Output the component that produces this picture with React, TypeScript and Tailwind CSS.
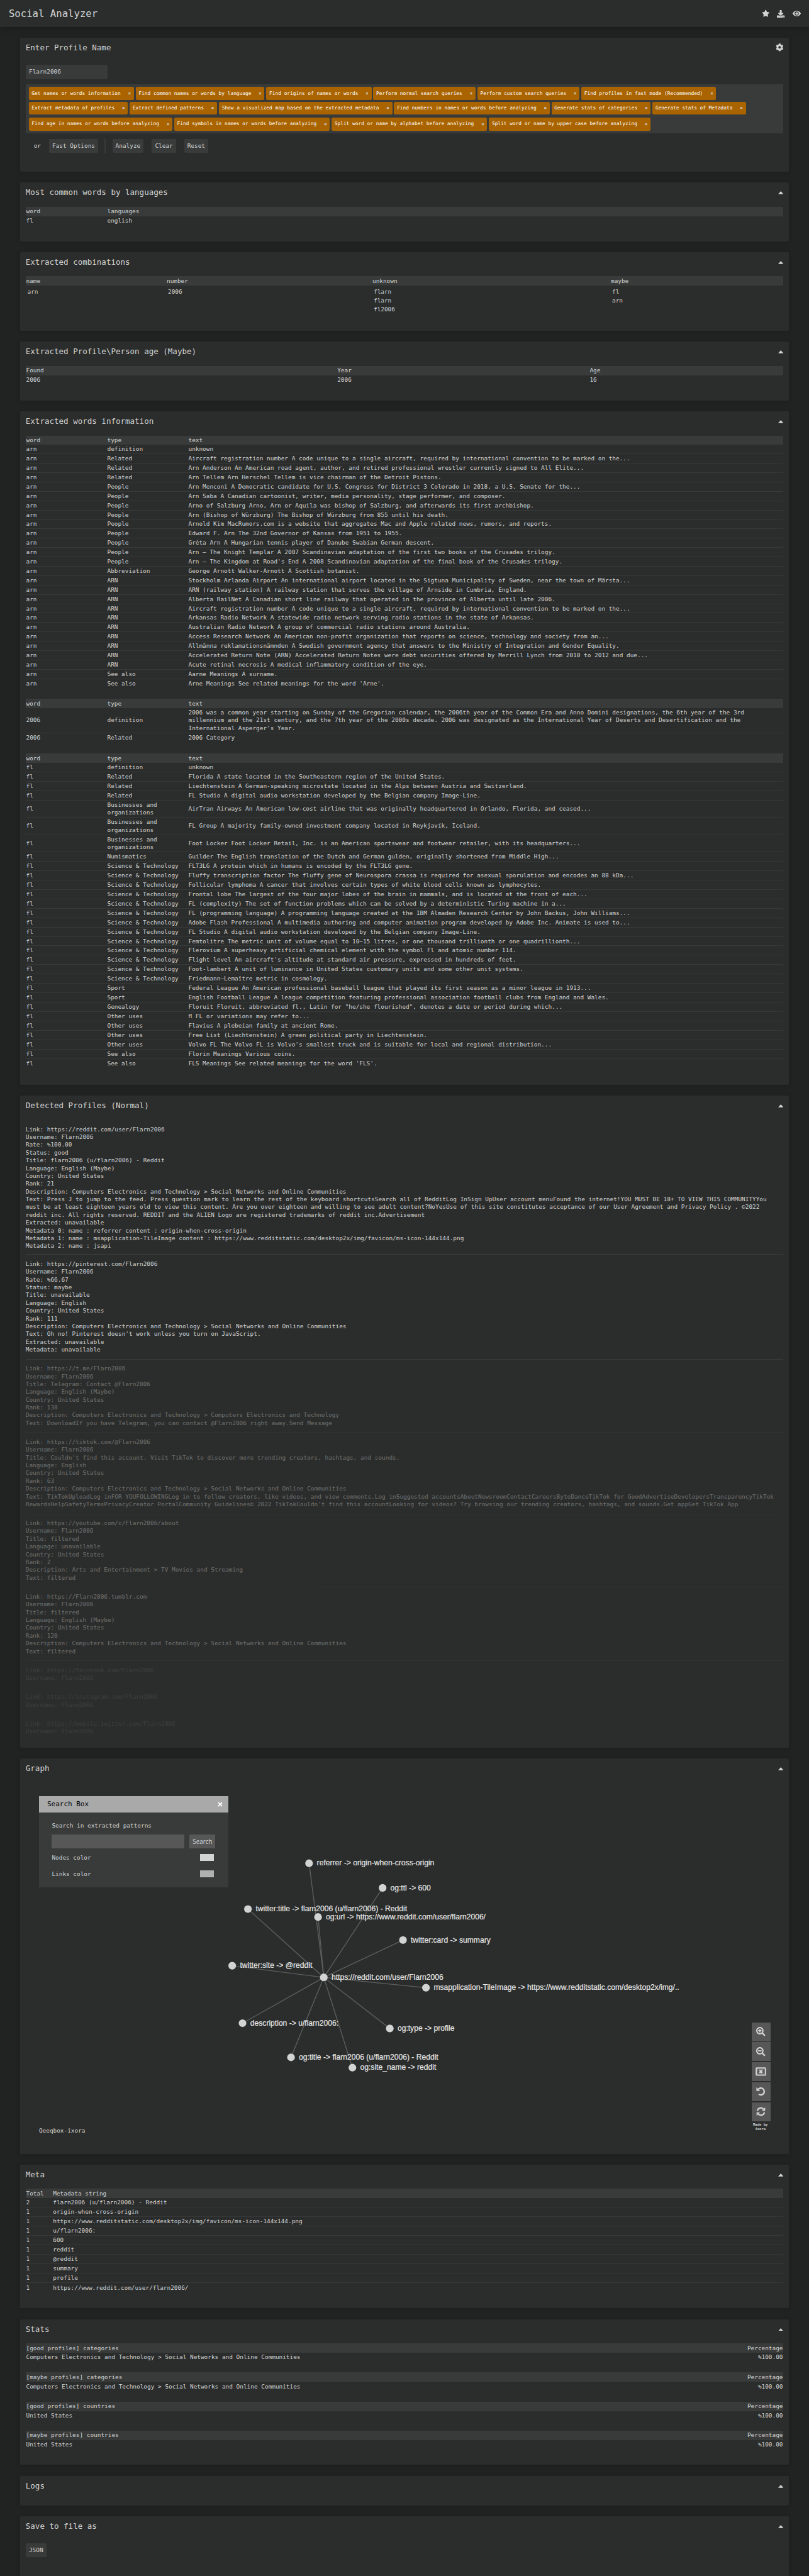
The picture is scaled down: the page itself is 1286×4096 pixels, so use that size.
import React from 'react';
import { FaStar, FaCog, FaDownload, FaEye, FaSearchPlus, FaSearchMinus, FaTimes } from 'react-icons/fa';

type Row = string[];

const TAG_ROWS: string[][] = [
  [
    'Get names or words information',
    'Find common names or words by language',
    'Find origins of names or words',
    'Perform normal search queries',
    'Perform custom search queries',
    'Find profiles in fast mode (Recommended)',
  ],
  [
    'Extract metadata of profiles',
    'Extract defined patterns',
    'Show a visualized map based on the extracted metadata',
    'Find numbers in names or words before analyzing',
    'Generate stats of categories',
    'Generate stats of Metadata',
  ],
  [
    'Find age in names or words before analyzing',
    'Find symbols in names or words before analyzing',
    'Split word or name by alphabet before analyzing',
    'Split word or name by upper case before analyzing',
  ],
];

const ARN: Row[] = [
  ['arn', 'definition', 'unknown'],
  ['arn', 'Related', 'Aircraft registration number A code unique to a single aircraft, required by international convention to be marked on the...'],
  ['arn', 'Related', 'Arn Anderson An American road agent, author, and retired professional wrestler currently signed to All Elite...'],
  ['arn', 'Related', 'Arn Tellem Arn Herschel Tellem is vice chairman of the Detroit Pistons.'],
  ['arn', 'People', 'Arn Menconi A Democratic candidate for U.S. Congress for District 3 Colorado in 2018, a U.S. Senate for the...'],
  ['arn', 'People', 'Arn Saba A Canadian cartoonist, writer, media personality, stage performer, and composer.'],
  ['arn', 'People', 'Arno of Salzburg Arno, Arn or Aquila was bishop of Salzburg, and afterwards its first archbishop.'],
  ['arn', 'People', 'Arn (Bishop of Würzburg) The Bishop of Würzburg from 855 until his death.'],
  ['arn', 'People', 'Arnold Kim MacRumors.com is a website that aggregates Mac and Apple related news, rumors, and reports.'],
  ['arn', 'People', 'Edward F. Arn The 32nd Governor of Kansas from 1951 to 1955.'],
  ['arn', 'People', 'Gréta Arn A Hungarian tennis player of Danube Swabian German descent.'],
  ['arn', 'People', 'Arn – The Knight Templar A 2007 Scandinavian adaptation of the first two books of the Crusades trilogy.'],
  ['arn', 'People', "Arn – The Kingdom at Road's End A 2008 Scandinavian adaptation of the final book of the Crusades trilogy."],
  ['arn', 'Abbreviation', 'George Arnott Walker-Arnott A Scottish botanist.'],
  ['arn', 'ARN', 'Stockholm Arlanda Airport An international airport located in the Sigtuna Municipality of Sweden, near the town of Märsta...'],
  ['arn', 'ARN', 'ARN (railway station) A railway station that serves the village of Arnside in Cumbria, England.'],
  ['arn', 'ARN', 'Alberta RailNet A Canadian short line railway that operated in the province of Alberta until late 2006.'],
  ['arn', 'ARN', 'Aircraft registration number A code unique to a single aircraft, required by international convention to be marked on the...'],
  ['arn', 'ARN', 'Arkansas Radio Network A statewide radio network serving radio stations in the state of Arkansas.'],
  ['arn', 'ARN', 'Australian Radio Network A group of commercial radio stations around Australia.'],
  ['arn', 'ARN', 'Access Research Network An American non-profit organization that reports on science, technology and society from an...'],
  ['arn', 'ARN', 'Allmänna reklamationsnämnden A Swedish government agency that answers to the Ministry of Integration and Gender Equality.'],
  ['arn', 'ARN', 'Accelerated Return Note (ARN) Accelerated Return Notes were debt securities offered by Merrill Lynch from 2010 to 2012 and due...'],
  ['arn', 'ARN', 'Acute retinal necrosis A medical inflammatory condition of the eye.'],
  ['arn', 'See also', 'Aarne Meanings A surname.'],
  ['arn', 'See also', "Arne Meanings See related meanings for the word 'Arne'."],
];

const Y2006: Row[] = [
  [
    '2006',
    'definition',
    "2006 was a common year starting on Sunday of the Gregorian calendar, the 2006th year of the Common Era and Anno Domini designations, the 6th year of the 3rd\nmillennium and the 21st century, and the 7th year of the 2000s decade. 2006 was designated as the International Year of Deserts and Desertification and the\nInternational Asperger's Year.",
  ],
  ['2006', 'Related', '2006 Category'],
];

const BO = 'Businesses and\norganizations';
const ST = 'Science & Technology';
const FL: Row[] = [
  ['fl', 'definition', 'unknown'],
  ['fl', 'Related', 'Florida A state located in the Southeastern region of the United States.'],
  ['fl', 'Related', 'Liechtenstein A German-speaking microstate located in the Alps between Austria and Switzerland.'],
  ['fl', 'Related', 'FL Studio A digital audio workstation developed by the Belgian company Image-Line.'],
  ['fl', BO, 'AirTran Airways An American low-cost airline that was originally headquartered in Orlando, Florida, and ceased...'],
  ['fl', BO, 'FL Group A majority family-owned investment company located in Reykjavík, Iceland.'],
  ['fl', BO, 'Foot Locker Foot Locker Retail, Inc. is an American sportswear and footwear retailer, with its headquarters...'],
  ['fl', 'Numismatics', 'Guilder The English translation of the Dutch and German gulden, originally shortened from Middle High...'],
  ['fl', ST, 'FLT3LG A protein which in humans is encoded by the FLT3LG gene.'],
  ['fl', ST, 'Fluffy transcription factor The fluffy gene of Neurospora crassa is required for asexual sporulation and encodes an 88 kDa...'],
  ['fl', ST, 'Follicular lymphoma A cancer that involves certain types of white blood cells known as lymphocytes.'],
  ['fl', ST, 'Frontal lobe The largest of the four major lobes of the brain in mammals, and is located at the front of each...'],
  ['fl', ST, 'FL (complexity) The set of function problems which can be solved by a deterministic Turing machine in a...'],
  ['fl', ST, 'FL (programming language) A programming language created at the IBM Almaden Research Center by John Backus, John Williams...'],
  ['fl', ST, 'Adobe Flash Professional A multimedia authoring and computer animation program developed by Adobe Inc. Animate is used to...'],
  ['fl', ST, 'FL Studio A digital audio workstation developed by the Belgian company Image-Line.'],
  ['fl', ST, 'Femtolitre The metric unit of volume equal to 10−15 litres, or one thousand trillionth or one quadrillionth...'],
  ['fl', ST, 'Flerovium A superheavy artificial chemical element with the symbol Fl and atomic number 114.'],
  ['fl', ST, "Flight level An aircraft's altitude at standard air pressure, expressed in hundreds of feet."],
  ['fl', ST, 'Foot-lambert A unit of luminance in United States customary units and some other unit systems.'],
  ['fl', ST, 'Friedmann–Lemaître metric in cosmology.'],
  ['fl', 'Sport', 'Federal League An American professional baseball league that played its first season as a minor league in 1913...'],
  ['fl', 'Sport', 'English Football League A league competition featuring professional association football clubs from England and Wales.'],
  ['fl', 'Genealogy', 'Floruit Floruit, abbreviated fl., Latin for "he/she flourished", denotes a date or period during which...'],
  ['fl', 'Other uses', 'ﬂ FL or variations may refer to...'],
  ['fl', 'Other uses', 'Flavius A plebeian family at ancient Rome.'],
  ['fl', 'Other uses', 'Free List (Liechtenstein) A green political party in Liechtenstein.'],
  ['fl', 'Other uses', "Volvo FL The Volvo FL is Volvo's smallest truck and is suitable for local and regional distribution..."],
  ['fl', 'See also', 'Florin Meanings Various coins.'],
  ['fl', 'See also', "FLS Meanings See related meanings for the word 'FLS'."],
];

const SOCIAL = 'Computers Electronics and Technology > Social Networks and Online Communities';

const PROFILES: { tone: string; lines: string[] }[] = [
  {
    tone: 'opacity-100 pb-[6.6px]',
    lines: [
      'Link: https://reddit.com/user/Flarn2006',
      'Username: Flarn2006',
      'Rate: %100.00',
      'Status: good',
      'Title: flarn2006 (u/flarn2006) - Reddit',
      'Language: English (Maybe)',
      'Country: United States',
      'Rank: 21',
      'Description: ' + SOCIAL,
      'Text: Press J to jump to the feed. Press question mark to learn the rest of the keyboard shortcutsSearch all of RedditLog InSign UpUser account menuFound the internet!YOU MUST BE 18+ TO VIEW THIS COMMUNITYYou',
      'must be at least eighteen years old to view this content. Are you over eighteen and willing to see adult content?NoYesUse of this site constitutes acceptance of our User Agreement and Privacy Policy . ©2022',
      'reddit inc. All rights reserved. REDDIT and the ALIEN Logo are registered trademarks of reddit inc.Advertisement',
      'Extracted: unavailable',
      'Metadata 0: name : referrer content : origin-when-cross-origin',
      'Metadata 1: name : msapplication-TileImage content : https://www.redditstatic.com/desktop2x/img/favicon/ms-icon-144x144.png',
      'Metadata 2: name : jsapi',
    ],
  },
  {
    tone: 'opacity-100 pb-[8.2px]',
    lines: [
      'Link: https://pinterest.com/Flarn2006',
      'Username: Flarn2006',
      'Rate: %66.67',
      'Status: maybe',
      'Title: unavailable',
      'Language: English',
      'Country: United States',
      'Rank: 111',
      'Description: ' + SOCIAL,
      "Text: Oh no! Pinterest doesn't work unless you turn on JavaScript.",
      'Extracted: unavailable',
      'Metadata: unavailable',
    ],
  },
  {
    tone: 'opacity-40 pb-[8.2px]',
    lines: [
      'Link: https://t.me/Flarn2006',
      'Username: Flarn2006',
      'Title: Telegram: Contact @Flarn2006',
      'Language: English (Maybe)',
      'Country: United States',
      'Rank: 138',
      'Description: Computers Electronics and Technology > Computers Electronics and Technology',
      'Text: DownloadIf you have Telegram, you can contact @Flarn2006 right away.Send Message',
    ],
  },
  {
    tone: 'opacity-40 pb-[8.2px]',
    lines: [
      'Link: https://tiktok.com/@Flarn2006',
      'Username: Flarn2006',
      "Title: Couldn't find this account. Visit TikTok to discover more trending creators, hashtags, and sounds.",
      'Language: English',
      'Country: United States',
      'Rank: 63',
      'Description: ' + SOCIAL,
      'Text: TikTokUploadLog inFOR YOUFOLLOWINGLog in to follow creators, like videos, and view comments.Log inSuggested accountsAboutNewsroomContactCareersByteDanceTikTok for GoodAdvertiseDevelopersTransparencyTikTok',
      "RewardsHelpSafetyTermsPrivacyCreator PortalCommunity Guidelines© 2022 TikTokCouldn't find this accountLooking for videos? Try browsing our trending creators, hashtags, and sounds.Get appGet TikTok App",
    ],
  },
  {
    tone: 'opacity-40 pb-[8.2px]',
    lines: [
      'Link: https://youtube.com/c/Flarn2006/about',
      'Username: Flarn2006',
      'Title: filtered',
      'Language: unavailable',
      'Country: United States',
      'Rank: 2',
      'Description: Arts and Entertainment > TV Movies and Streaming',
      'Text: filtered',
    ],
  },
  {
    tone: 'opacity-40 pb-[8.2px]',
    lines: [
      'Link: https://Flarn2006.tumblr.com',
      'Username: Flarn2006',
      'Title: filtered',
      'Language: English (Maybe)',
      'Country: United States',
      'Rank: 120',
      'Description: ' + SOCIAL,
      'Text: filtered',
    ],
  },
  { tone: 'opacity-10 pb-[8.2px]', lines: ['Link: https://facebook.com/Flarn2006', 'Username: Flarn2006'] },
  { tone: 'opacity-10 pb-[8.2px]', lines: ['Link: https://instagram.com/Flarn2006', 'Username: Flarn2006'] },
  { tone: 'opacity-10 pb-[8.2px]', lines: ['Link: https://mobile.twitter.com/Flarn2006', 'Username: Flarn2006'] },
];

const META: Row[] = [
  ['2', 'flarn2006 (u/flarn2006) - Reddit'],
  ['1', 'origin-when-cross-origin'],
  ['1', 'https://www.redditstatic.com/desktop2x/img/favicon/ms-icon-144x144.png'],
  ['1', 'u/flarn2006:'],
  ['1', '600'],
  ['1', 'reddit'],
  ['1', '@reddit'],
  ['1', 'summary'],
  ['1', 'profile'],
  ['1', 'https://www.reddit.com/user/flarn2006/'],
];

const STATS: Row[] = [
  ['[good profiles] categories', SOCIAL],
  ['[maybe profiles] categories', SOCIAL],
  ['[good profiles] countries', 'United States'],
  ['[maybe profiles] countries', 'United States'],
];

const HUB = { x: 482.7, y: 348.2, label: 'https://reddit.com/user/Flarn2006' };
const NODES = [
  { x: 459.3, y: 166.7, label: 'referrer -> origin-when-cross-origin' },
  { x: 576.2, y: 205.9, label: 'og:ttl -> 600' },
  { x: 362.1, y: 239.5, label: 'twitter:title -> flarn2006 (u/flarn2006) - Reddit' },
  { x: 473.6, y: 252.2, label: 'og:url -> https://www.reddit.com/user/flarn2006/' },
  { x: 608.6, y: 288.8, label: 'twitter:card -> summary' },
  { x: 337.1, y: 329.6, label: 'twitter:site -> @reddit' },
  { x: 645.1, y: 364.6, label: 'msapplication-TileImage -> https://www.redditstatic.com/desktop2x/img/..' },
  { x: 353.5, y: 421.0, label: 'description -> u/flarn2006:' },
  { x: 587.6, y: 429.4, label: 'og:type -> profile' },
  { x: 430.6, y: 475.3, label: 'og:title -> flarn2006 (u/flarn2006) - Reddit' },
  { x: 528.2, y: 491.7, label: 'og:site_name -> reddit' },
];

function Caret() {
  return (
    <svg className="mt-[14.1px] h-[4.8px] w-[8.4px]" viewBox="0 0 10 6" preserveAspectRatio="none">
      <path d="M5 0 L10 6 L0 6 Z" fill="#d3d3d3" />
    </svg>
  );
}

function Card({ title, className, icon, children }: { title: string; className: string; icon?: React.ReactNode; children?: React.ReactNode }) {
  return (
    <section className={'relative shrink-0 rounded-[2px] bg-[#2b2d2c] px-[8.4px] shadow-[0_1px_7px_rgba(0,0,0,0.16)] ' + className}>
      <div className="flex h-[38.5px] items-start justify-between">
        <h2 className="text-[12.53px] leading-[31px]">{title}</h2>
        {icon ?? <Caret />}
      </div>
      {children}
    </section>
  );
}

const TH = 'grid h-[14.9px] items-center bg-[#393b3a] px-[0.7px] ';

function Table({ head, rows, cols, rowH = 'min-h-[14.9px]' }: { head: string[]; rows: Row[]; cols: string; rowH?: string }) {
  return (
    <div>
      <div className={TH + cols}>
        {head.map((h) => (
          <span key={h}>{h}</span>
        ))}
      </div>
      {rows.map((r, i) => {
        const lines = Math.max(...r.map((c) => c.split('\n').length));
        const h = lines === 3 ? 'min-h-[39.7px]' : lines === 2 ? 'min-h-[27.35px]' : rowH;
        return (
          <div
            key={i}
            className={'grid items-center whitespace-pre px-[0.7px] ' + cols + ' ' + h + (i < rows.length - 1 ? ' border-b border-[#373938]' : '')}
          >
            {r.map((c, j) => (
              <span key={j} className={lines > 1 ? 'leading-[12.3px]' : 'leading-[12px]'}>
                {c}
              </span>
            ))}
          </div>
        );
      })}
    </div>
  );
}

function Button({ children, className = '' }: { children: React.ReactNode; className?: string }) {
  return (
    <button className={'flex h-[21.9px] items-center justify-center rounded-[2px] bg-[#393b3a] ' + className}>{children}</button>
  );
}

function ToolButton({ children }: { children: React.ReactNode }) {
  return <button className="flex h-[30px] w-[30.3px] items-center justify-center bg-[#575757] text-[#d3d3d3]">{children}</button>;
}

function Graph() {
  return (
    <svg className="absolute left-0 top-0 h-full w-full" viewBox="0 0 1221.2 628.6">
      {NODES.map((n) => (
        <line key={n.label} x1={HUB.x} y1={HUB.y} x2={n.x} y2={n.y} stroke="#5c5e5d" strokeWidth="1.4" />
      ))}
      {[HUB, ...NODES].map((n) => (
        <g key={n.label}>
          <circle cx={n.x} cy={n.y} r="6.1" fill="#d3d3d3" />
          <text x={n.x + 12.3} y={n.y + 3.8} fill="#e6e6e6" stroke="#e6e6e6" strokeWidth="0.2" className="font-['Liberation_Sans',Arial,sans-serif] text-[12.13px]">
            {n.label}
          </text>
        </g>
      ))}
    </svg>
  );
}

export default function App() {
  return (
    <div className="flex h-[4096px] w-full flex-col overflow-hidden bg-[#212322] font-['DejaVu_Sans_Mono','Liberation_Mono',monospace] text-[9.41px] leading-[12px] text-[#d3d3d3]">
      <header className="flex h-[43.3px] shrink-0 items-center justify-between bg-[#2b2d2c] pl-[13.9px] pr-[13.4px] shadow-[0_2px_10px_rgba(0,0,0,0.22)]">
        <h1 className="text-[15.65px] leading-none">Social Analyzer</h1>
        <div className="flex items-center gap-[12px]">
          <FaStar size={12.4} />
          <FaDownload size={12.2} />
          <FaEye size={13} />
        </div>
      </header>

      <main className="flex flex-col px-[32.4px]">
        <Card title="Enter Profile Name" className="mt-[17.1px] h-[212.6px]" icon={<FaCog size={12.6} className="mt-[8.6px]" />}>
          <div className="mt-[4.3px] flex h-[22.5px] w-[130px] items-center rounded-[2px] bg-[#393b3a] pl-[5.2px]">Flarn2006</div>
          <div className="mt-[8.4px] flex h-[77.6px] flex-col bg-[#393b3a] pl-[4.8px] pt-[4.2px] text-[7.84px]">
            {TAG_ROWS.map((row, i) => (
              <div key={i} className={'flex gap-[2.9px] ' + (i === 1 ? 'mt-[2.7px]' : i === 2 ? 'mt-[4.9px]' : '')}>
                {row.map((t) => (
                  <span
                    key={t}
                    className="flex h-[20.6px] items-center whitespace-nowrap rounded-[2.5px] bg-[#a96400] pl-[4.7px] pr-[4.6px] text-white"
                  >
                    {t}
                    <b className="ml-[11.8px] mt-[1px] w-[4.7px] text-center text-[7.6px] text-[#d3d3d3]">×</b>
                  </span>
                ))}
              </div>
            ))}
          </div>
          <div className="mt-[9.1px] flex items-center">
            <span className="ml-[12.9px] w-[24.2px]">or</span>
            <Button className="w-[78.3px]">Fast Options</Button>
            <span className="ml-[10.2px] mr-[10.3px] h-[21.9px] w-[2px] bg-[#393b3a]" />
            <Button className="w-[49.6px]">Analyze</Button>
            <Button className="ml-[13.1px] w-[38.6px]">Clear</Button>
            <Button className="ml-[12.7px] w-[38.5px]">Reset</Button>
          </div>
        </Card>

        <Card title="Most common words by languages" className="mt-[17.2px] h-[93.5px]">
          <Table head={['word', 'languages']} rows={[['fl', 'english']]} cols="grid-cols-[129px_1fr]" />
        </Card>

        <Card title="Extracted combinations" className="mt-[17.2px] h-[125.1px]">
          <div className={TH + 'grid-cols-[223.5px_327px_379px_1fr]'}>
            <span>name</span>
            <span>number</span>
            <span>unknown</span>
            <span>maybe</span>
          </div>
          <div className="grid grid-cols-[223.5px_327px_379px_1fr] px-[2.7px] pt-[2.6px] leading-[14.03px]">
            <span>arn</span>
            <span>2006</span>
            <div className="flex flex-col">
              <span>flarn</span>
              <span>flarn</span>
              <span>fl2006</span>
            </div>
            <div className="flex flex-col">
              <span>fl</span>
              <span>arn</span>
            </div>
          </div>
        </Card>

        <Card title="Extracted Profile\Person age (Maybe)" className="mt-[17.2px] h-[93.8px]">
          <Table head={['Found', 'Year', 'Age']} rows={[['2006', '2006', '16']]} cols="grid-cols-[494.7px_401.3px_1fr]" />
        </Card>

        <Card title="Extracted words information" className="mt-[17.1px] h-[1070.5px]">
          <Table head={['word', 'type', 'text']} rows={ARN} cols="grid-cols-[129px_129px_1fr]" />
          <div className="h-[16.8px]" />
          <Table head={['word', 'type', 'text']} rows={Y2006} cols="grid-cols-[129px_129px_1fr]" />
          <div className="h-[17.6px]" />
          <Table head={['word', 'type', 'text']} rows={FL} cols="grid-cols-[129px_129px_1fr]" rowH="min-h-[14.95px]" />
        </Card>

        <Card title="Detected Profiles (Normal)" className="mt-[17.4px] h-[1037.1px]">
          <div className="flex flex-col pt-[0.7px]">
            {PROFILES.map((p, i) => (
              <div key={i} className={'flex flex-col whitespace-pre border-b border-[#393b3a] pt-[8.6px] leading-[12.37px] ' + p.tone}>
                {p.lines.map((l, j) => (
                  <span key={j}>{l}</span>
                ))}
              </div>
            ))}
          </div>
        </Card>

        <Card title="Graph" className="mt-[17px] h-[628.6px]">
          <Graph />
          <div className="absolute left-[29.5px] top-[60.2px] h-[144.4px] w-[301px] bg-[#393b3a]">
            <div className="flex h-[26px] items-center justify-between bg-[#a9a9a9] pl-[13.1px] pr-[8px] text-[10.97px] text-black">
              <span>Search Box</span>
              <FaTimes size={10} color="#ffffff" />
            </div>
            <div className="flex flex-col px-[20.5px] pt-[14.3px]">
              <span>Search in extracted patterns</span>
              <div className="mt-[8.7px] flex justify-between">
                <span className="h-[21.5px] w-[210.4px] bg-[#575757]" />
                <button className="h-[21.5px] w-[41px] bg-[#575757] font-['Open_Sans',sans-serif] text-[9.9px]">Search</button>
              </div>
              <div className="mt-[7px] flex h-[16px] items-center justify-between pr-[2px]">
                <span>Nodes color</span>
                <span className="h-[11.4px] w-[22.2px] bg-[#d3d3d3]" />
              </div>
              <div className="mt-[9.9px] flex h-[16px] items-center justify-between pr-[2px]">
                <span>Links color</span>
                <span className="h-[11.4px] w-[22.2px] bg-[#b0b0b0]" />
              </div>
            </div>
          </div>
          <span className="absolute left-[29.5px] top-[586px]">Qeeqbox-ixora</span>
          <div className="absolute left-[1162.2px] top-[419.5px] flex flex-col gap-[1.8px]">
            <ToolButton>
              <FaSearchPlus size={14.5} />
            </ToolButton>
            <ToolButton>
              <FaSearchMinus size={14.5} />
            </ToolButton>
            <ToolButton>
              <svg width="17" height="14" viewBox="0 0 17 14">
                <rect x="1.2" y="1.2" width="14.6" height="11.4" rx="0.6" fill="none" stroke="currentColor" strokeWidth="2" />
                <rect x="3.6" y="3.2" width="9.8" height="7.4" fill="none" stroke="currentColor" strokeWidth="0.6" opacity="0.5" />
                <path d="M6.3 4.7 L10.7 9.1 M10.7 4.7 L6.3 9.1" stroke="currentColor" strokeWidth="2.3" />
              </svg>
            </ToolButton>
            <ToolButton>
              <svg width="15" height="15" viewBox="0 0 15 15">
                <path d="M3.2 4.3 A5.4 5.4 0 1 1 4.1 11.9" fill="none" stroke="currentColor" strokeWidth="2.4" />
                <path d="M0.4 1 L0.4 6.7 L6.4 6.7 Z" fill="currentColor" />
              </svg>
            </ToolButton>
            <ToolButton>
              <svg width="15" height="15" viewBox="0 0 15 15">
                <path d="M1.9 6.2 A5.6 5.6 0 0 1 11.8 3.9 M13.1 8.8 A5.6 5.6 0 0 1 3.2 11.1" fill="none" stroke="currentColor" strokeWidth="2.2" />
                <path d="M14.3 0.8 L14.3 6.2 L8.9 6.2 Z M0.7 14.2 L0.7 8.8 L6.1 8.8 Z" fill="currentColor" />
              </svg>
            </ToolButton>
            <span className="mt-[0.6px] w-[30.3px] pr-[2px] text-center text-[5.55px] font-bold leading-[6.7px]">
              Made by
              <br />
              ixora
            </span>
          </div>
        </Card>

        <Card title="Meta" className="mt-[17.3px] h-[228.5px]">
          <Table head={['Total', 'Metadata string']} rows={META} cols="grid-cols-[42.8px_1fr]" rowH="min-h-[15px]" />
        </Card>

        <Card title="Stats" className="mt-[17.2px] h-[231.8px]">
          <div className="flex flex-col gap-[16.5px]">
            {STATS.map(([h, v]) => (
              <div key={h}>
                <div className="flex h-[14.9px] items-center justify-between bg-[#393b3a] px-[0.7px]">
                  <span>{h}</span>
                  <span>Percentage</span>
                </div>
                <div className="flex h-[14.9px] items-center justify-between px-[0.7px]">
                  <span>{v}</span>
                  <span>%100.00</span>
                </div>
              </div>
            ))}
          </div>
        </Card>

        <Card title="Logs" className="mt-[17.6px] h-[46.6px]" />

        <Card title="Save to file as" className="mt-[17.6px] h-[100px]">
          <Button className="mt-[4.7px] w-[32.9px]">JSON</Button>
        </Card>
      </main>
    </div>
  );
}
